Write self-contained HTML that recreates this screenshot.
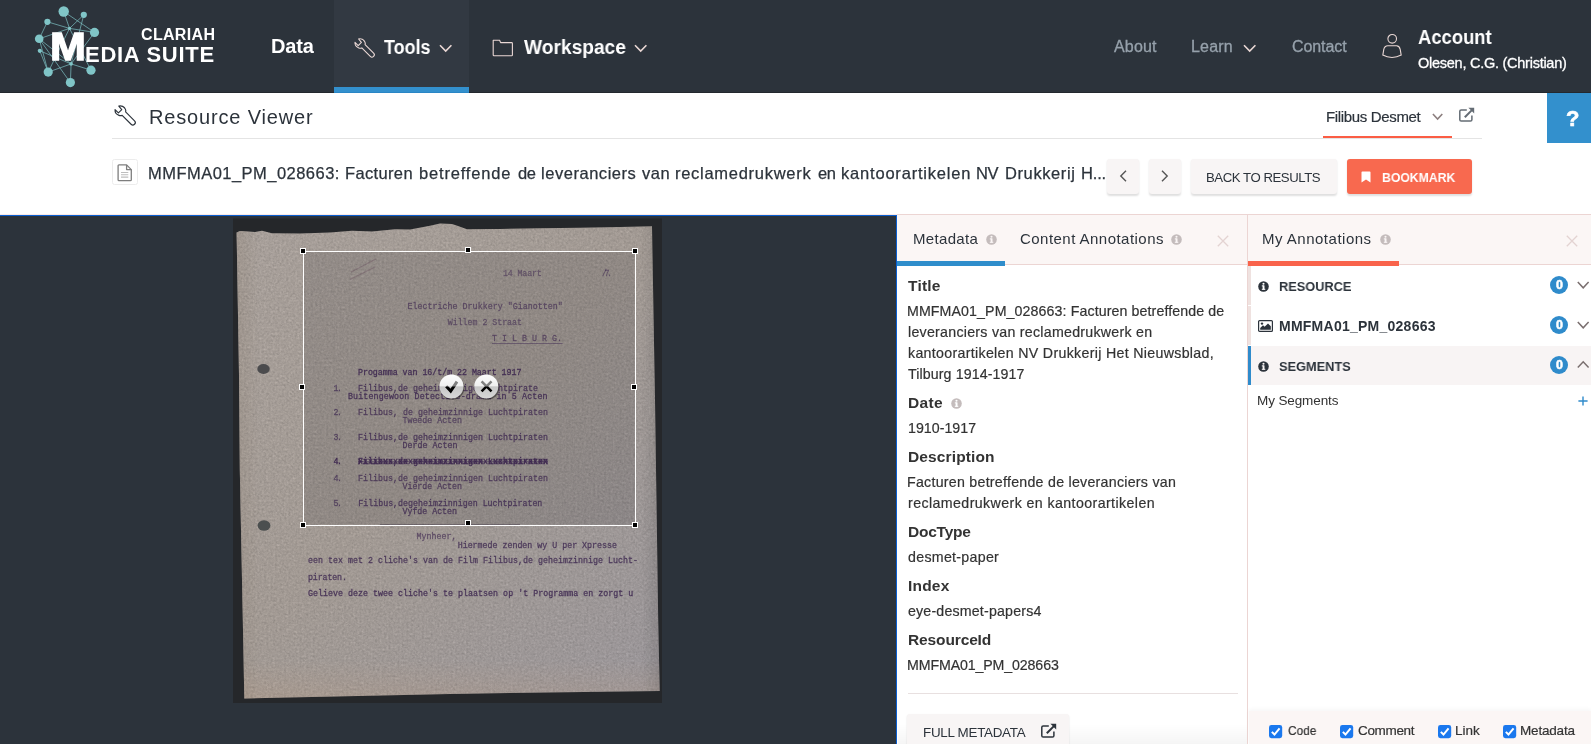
<!DOCTYPE html>
<html lang="en"><head><meta charset="utf-8"><title>Resource Viewer</title>
<style>
html,body{margin:0;padding:0}
body{width:1591px;height:744px;overflow:hidden;position:relative;background:#fff;font-family:"Liberation Sans",sans-serif;}
.a{position:absolute;display:block}
.t{will-change:transform;position:absolute;white-space:pre;line-height:normal;font-family:"Liberation Sans",sans-serif}
.btn{position:absolute;background:#f8f5f5;border-radius:3px;box-shadow:0 1.5px 2px rgba(0,0,0,.13)}
svg{position:absolute;overflow:visible}
.mono{position:absolute;white-space:pre;line-height:1;font-family:"Liberation Mono",monospace;font-weight:400;color:rgba(66,48,84,.62);font-size:8.3px;filter:blur(.35px)}

</style></head><body>
<!-- header -->
<div class="a" style="left:0;top:0;width:1591px;height:93px;background:#23282e"></div><div class="a" style="left:0;top:0;width:1591px;height:92.2px;background:#2c333b"></div>
<div class="a" style="left:334px;top:0;width:135px;height:93px;background:#323942"></div>
<div class="a" style="left:334px;top:87px;width:135px;height:6px;background:#2a86c5"></div><div class="a" style="left:334px;top:87px;width:135px;height:5.2px;background:#3390cd"></div>
<!-- logo network -->
<svg style="left:0;top:0" width="240" height="92" viewBox="0 0 240 92">
 <path d="M63.7 11.5 L69.5 28.4 M63.7 11.5 L94.5 32.4 M83.8 14.8 L69.5 28.4 M83.8 14.8 L71.1 63.9 M47.4 21.8 L69.5 28.4 M47.4 21.8 L39.2 38.8 M39.2 38.8 L69.5 28.4 M39.2 38.8 L71.1 63.9 M39.8 50.8 L71.1 63.9 M39.8 50.8 L48.2 72.1 M48.2 72.1 L71.1 63.9 M48.2 72.1 L69.5 28.4 M70.4 82.6 L71.1 63.9 M70.4 82.6 L39.2 38.8 M91 70.2 L71.1 63.9 M91 70.2 L69.5 28.4 M94.5 32.4 L71.1 63.9 M94.5 32.4 L69.5 28.4 M39.2 38.8 L48.2 72.1" stroke="#7cc0c3" stroke-width="0.7" fill="none"/>
 <g fill="#80c5c7"><circle cx="63.7" cy="11.5" r="5.2"/><circle cx="83.8" cy="14.8" r="3.1"/><circle cx="94.5" cy="32.4" r="4.6"/><circle cx="47.4" cy="21.8" r="3.1"/><circle cx="39.2" cy="38.8" r="4.3"/><circle cx="39.8" cy="50.8" r="2.1"/><circle cx="48.2" cy="72.1" r="4.6"/><circle cx="70.4" cy="82.6" r="4.6"/><circle cx="91" cy="70.2" r="4.6"/><circle cx="69.5" cy="28.4" r="1.6"/><circle cx="71.1" cy="63.9" r="1.8"/></g>
</svg>
<!-- header icons -->
<svg style="left:354px;top:38px" width="21" height="21" viewBox="0 0 21 21" fill="none" stroke="#ead8d5" stroke-width="1.1" stroke-linejoin="round" stroke-linecap="round">
 <path d="M4.6 1 C7 0.3 9.8 1.6 10.8 3.8 C11.3 4.8 11.4 5.8 11.1 6.6 L19.6 15.1 C20.5 16 20.5 17.5 19.6 18.4 C18.7 19.3 17.2 19.3 16.3 18.4 L7.8 9.9 C6.9 10.3 5.8 10.3 4.8 9.9 C2.4 9 0.8 6.9 1 4.4 L4.2 7.6 L7.4 4.4 Z"/>
</svg>
<svg style="left:439px;top:44px" width="14" height="9" viewBox="0 0 14 9" fill="none" stroke="#ead8d5" stroke-width="1.6"><path d="M1 1.2 L6.7 7 L12.4 1.2"/></svg>
<svg style="left:492px;top:39px" width="22" height="18" viewBox="0 0 22 18" fill="none" stroke="#ead8d5" stroke-width="1.1" stroke-linejoin="round"><path d="M1.2 1.2 H7.6 L8.6 3.6 H19.6 Q20.4 3.6 20.4 4.4 V16 Q20.4 16.8 19.6 16.8 H2 Q1.2 16.8 1.2 16 Z"/></svg>
<svg style="left:634px;top:44px" width="14" height="9" viewBox="0 0 14 9" fill="none" stroke="#ead8d5" stroke-width="1.6"><path d="M1 1.2 L6.7 7 L12.4 1.2"/></svg>
<svg style="left:1243px;top:44px" width="14" height="9" viewBox="0 0 14 9" fill="none" stroke="#ead8d5" stroke-width="1.6"><path d="M1 1.2 L6.7 7 L12.4 1.2"/></svg>
<svg style="left:1382px;top:33px" width="20" height="26" viewBox="0 0 20 26" fill="none" stroke="#ead8d5" stroke-width="1.1"><circle cx="10.2" cy="5.8" r="4.3"/><path d="M5.8 12.8 H14.6 Q17.4 13 18.2 16.4 L19.2 22.1 Q15 24.5 10 24.5 Q5 24.5 0.8 22.1 L1.8 16.4 Q2.6 13 5.8 12.8 Z"/></svg>

<!-- sub header -->
<svg style="left:114px;top:105px" width="22" height="22" viewBox="0 0 21 21" fill="none" stroke="#2c333b" stroke-width="1.1" stroke-linejoin="round" stroke-linecap="round">
 <path d="M4.6 1 C7 0.3 9.8 1.6 10.8 3.8 C11.3 4.8 11.4 5.8 11.1 6.6 L19.6 15.1 C20.5 16 20.5 17.5 19.6 18.4 C18.7 19.3 17.2 19.3 16.3 18.4 L7.8 9.9 C6.9 10.3 5.8 10.3 4.8 9.9 C2.4 9 0.8 6.9 1 4.4 L4.2 7.6 L7.4 4.4 Z"/>
</svg>
<div class="a" style="left:112px;top:137.8px;width:1370px;height:1px;background:#e4e4e4"></div>
<div class="a" style="left:1323px;top:135.9px;width:129px;height:2.2px;background:#fb5d44"></div>
<svg style="left:1432.4px;top:113.4px" width="12" height="8" viewBox="0 0 12 8" fill="none" stroke="#8c7f7f" stroke-width="1.6"><path d="M0.9 1 L5.6 6 L10.3 1"/></svg>
<svg style="left:1458px;top:107px" width="17" height="16" viewBox="0 0 17 16" fill="none" stroke="#646c74" stroke-width="1.5"><path d="M13.9 8.6 V12.7 Q13.9 14.1 12.5 14.1 H3.2 Q1.8 14.1 1.8 12.7 V4.3 Q1.8 2.9 3.2 2.9 H8.8"/><path d="M6.8 10.2 L14.4 2.6" stroke-width="2"/><path d="M10.4 0.8 H16.2 V6.6 Z" fill="#646c74" stroke="none"/></svg>
<div class="a" style="left:1547px;top:93px;width:44px;height:50px;background:#3390cd"></div>
<!-- doc icon -->
<div class="a" style="left:111.8px;top:159.2px;width:24.2px;height:24px;border:1px solid #ececec;border-radius:2.5px;background:#fff"></div>
<svg style="left:117px;top:164px" width="16" height="18" viewBox="0 0 16 18" fill="none" stroke="#7e7e7e" stroke-width="1.3" stroke-linejoin="round"><path d="M1.1 1.8 Q1.1 0.9 2 0.9 H9.6 L14.3 5.6 V15.8 Q14.3 16.7 13.4 16.7 H2 Q1.1 16.7 1.1 15.8 Z"/><path d="M9.6 0.9 V5.6 H14.3"/><path d="M4 8.5 H11.3 M4 10.7 H11.3 M4 13.1 H11.3" stroke="#bdbdbd" stroke-width="1.1"/></svg>
<!-- buttons -->
<div class="btn" style="left:1107px;top:159px;width:32px;height:35px"></div>
<div class="btn" style="left:1149px;top:159px;width:32px;height:35px"></div>
<div class="btn" style="left:1191px;top:159px;width:146px;height:35px"></div>
<div class="btn" style="left:1347px;top:159px;width:125px;height:35px;background:#f8694f"></div>
<svg style="left:1118.6px;top:169.4px" width="9" height="14" viewBox="0 0 9 14" fill="none" stroke="#555" stroke-width="1.4"><path d="M7 1.8 L1.8 7 L7 12.2"/></svg>
<svg style="left:1160px;top:169.4px" width="9" height="14" viewBox="0 0 9 14" fill="none" stroke="#555" stroke-width="1.4"><path d="M2 1.8 L7.2 7 L2 12.2"/></svg>
<svg style="left:1361px;top:171px" width="10" height="12" viewBox="0 0 10 12"><path d="M0.5 1.2 Q0.5 0.4 1.3 0.4 H8.7 Q9.5 0.4 9.5 1.2 V11.6 L5 8.4 L0.5 11.6 Z" fill="#fff"/></svg>

<!-- top lines -->
<div class="a" style="left:0;top:214px;width:897px;height:1px;background:#fbeae4"></div>
<div class="a" style="left:897px;top:214px;width:694px;height:1px;background:#ecd5d3"></div>
<!-- viewer -->
<div class="a" style="left:0;top:215px;width:897px;height:529px;background:#0a5fd2"></div>
<div class="a" style="left:0;top:216.2px;width:895.6px;height:528px;background:#2c333b"></div>
<!-- panels -->
<div class="a" style="left:897px;top:215px;width:350px;height:49px;background:#fbf6f5"></div>
<div class="a" style="left:1248px;top:215px;width:343px;height:49px;background:#fbf6f5"></div>
<div class="a" style="left:897px;top:264px;width:694px;height:1px;background:#ecd5d3"></div>
<div class="a" style="left:1247px;top:215px;width:1px;height:529px;background:#ecd5d3"></div>
<div class="a" style="left:897px;top:261px;width:108px;height:5px;background:#2f8dcb"></div>
<div class="a" style="left:1248px;top:261px;width:151px;height:4.8px;background:#f9634b"></div>
<!-- info icons (tabs) -->
<svg style="left:986px;top:234px" width="11" height="11" viewBox="0 0 11 11"><circle cx="5.5" cy="5.5" r="5.3" fill="#c4bcbc"/><rect x="4.6" y="4.4" width="1.9" height="4.2" fill="#fbf6f5"/><rect x="3.8" y="4.4" width="2" height="1" fill="#fbf6f5"/><rect x="3.8" y="7.8" width="3.5" height="1" fill="#fbf6f5"/><circle cx="5.5" cy="2.7" r="1.05" fill="#fbf6f5"/></svg>
<svg style="left:1171px;top:234px" width="11" height="11" viewBox="0 0 11 11"><circle cx="5.5" cy="5.5" r="5.3" fill="#c4bcbc"/><rect x="4.6" y="4.4" width="1.9" height="4.2" fill="#fbf6f5"/><rect x="3.8" y="4.4" width="2" height="1" fill="#fbf6f5"/><rect x="3.8" y="7.8" width="3.5" height="1" fill="#fbf6f5"/><circle cx="5.5" cy="2.7" r="1.05" fill="#fbf6f5"/></svg>
<svg style="left:1380px;top:234px" width="11" height="11" viewBox="0 0 11 11"><circle cx="5.5" cy="5.5" r="5.3" fill="#c4bcbc"/><rect x="4.6" y="4.4" width="1.9" height="4.2" fill="#fbf6f5"/><rect x="3.8" y="4.4" width="2" height="1" fill="#fbf6f5"/><rect x="3.8" y="7.8" width="3.5" height="1" fill="#fbf6f5"/><circle cx="5.5" cy="2.7" r="1.05" fill="#fbf6f5"/></svg>
<svg style="left:950.5px;top:398.4px" width="11" height="11" viewBox="0 0 11 11"><circle cx="5.5" cy="5.5" r="5.3" fill="#c4bcbc"/><rect x="4.6" y="4.4" width="1.9" height="4.2" fill="#fff"/><rect x="3.8" y="4.4" width="2" height="1" fill="#fff"/><rect x="3.8" y="7.8" width="3.5" height="1" fill="#fff"/><circle cx="5.5" cy="2.7" r="1.05" fill="#fff"/></svg>
<!-- close X -->
<svg style="left:1217px;top:235px" width="12" height="12" viewBox="0 0 12 12" stroke="#e3d3d2" stroke-width="1.3"><path d="M0.8 0.8 L11.2 11.2 M11.2 0.8 L0.8 11.2"/></svg>
<svg style="left:1566px;top:235px" width="12" height="12" viewBox="0 0 12 12" stroke="#e3d3d2" stroke-width="1.3"><path d="M0.8 0.8 L11.2 11.2 M11.2 0.8 L0.8 11.2"/></svg>
<!-- metadata bottom -->
<div class="a" style="left:908px;top:693px;width:330px;height:1px;background:#e8e0e0"></div>
<div class="a" style="left:898px;top:724px;width:349px;height:20px;background:linear-gradient(to bottom,rgba(0,0,0,0),rgba(0,0,0,.04))"></div>
<div class="btn" style="left:907.4px;top:714px;width:161.2px;height:40px"></div>
<svg style="left:1040.4px;top:723.4px" width="17" height="16" viewBox="0 0 17 16" fill="none" stroke="#2c333b" stroke-width="1.5"><path d="M13.9 8.6 V12.7 Q13.9 14.1 12.5 14.1 H3.2 Q1.8 14.1 1.8 12.7 V4.3 Q1.8 2.9 3.2 2.9 H8.8"/><path d="M6.8 10.2 L14.4 2.6" stroke-width="2"/><path d="M10.4 0.8 H16.2 V6.6 Z" fill="#2c333b" stroke="none"/></svg>
<!-- annotation rows -->
<div class="a" style="left:1248px;top:265.5px;width:3px;height:39.5px;background:#efe2e0"></div>
<div class="a" style="left:1248px;top:306px;width:3px;height:39px;background:#efe2e0"></div>
<div class="a" style="left:1248px;top:346px;width:343px;height:39px;background:#f8f4f4"></div>
<div class="a" style="left:1248px;top:346px;width:3px;height:39px;background:#2f8bcb"></div>
<!-- row icons -->
<svg style="left:1258px;top:281px" width="11" height="11" viewBox="0 0 11 11"><circle cx="5.5" cy="5.5" r="5.3" fill="#2c333b"/><rect x="4.6" y="4.4" width="1.9" height="4.2" fill="#fff"/><rect x="3.8" y="4.4" width="2" height="1" fill="#fff"/><rect x="3.8" y="7.8" width="3.5" height="1" fill="#fff"/><circle cx="5.5" cy="2.7" r="1.05" fill="#fff"/></svg>
<svg style="left:1258px;top:361px" width="11" height="11" viewBox="0 0 11 11"><circle cx="5.5" cy="5.5" r="5.3" fill="#2c333b"/><rect x="4.6" y="4.4" width="1.9" height="4.2" fill="#f8f4f4"/><rect x="3.8" y="4.4" width="2" height="1" fill="#f8f4f4"/><rect x="3.8" y="7.8" width="3.5" height="1" fill="#f8f4f4"/><circle cx="5.5" cy="2.7" r="1.05" fill="#f8f4f4"/></svg>
<svg style="left:1258px;top:320px" width="15" height="12" viewBox="0 0 15 12"><rect x="0.6" y="0.6" width="13.8" height="10.8" rx="1" fill="none" stroke="#2c333b" stroke-width="1.2"/><path d="M2.2 9.8 V8 L5 5.2 L6.6 6.8 L10 3.4 L12.8 6.2 V9.8 Z" fill="#2c333b"/><circle cx="4" cy="3.6" r="1.2" fill="#2c333b"/></svg>
<!-- badges -->
<div class="a" style="left:1550px;top:276px;width:18px;height:18px;border-radius:9px;background:#2f8bcb"></div>
<div class="a" style="left:1550px;top:316px;width:18px;height:18px;border-radius:9px;background:#2f8bcb"></div>
<div class="a" style="left:1550px;top:356px;width:18px;height:18px;border-radius:9px;background:#2f8bcb"></div>
<svg style="left:1577px;top:281px" width="13" height="9" viewBox="0 0 13 9" fill="none" stroke="#7a6f6f" stroke-width="1.5"><path d="M0.8 1 L6.2 6.8 L11.6 1"/></svg>
<svg style="left:1577px;top:321px" width="13" height="9" viewBox="0 0 13 9" fill="none" stroke="#7a6f6f" stroke-width="1.5"><path d="M0.8 1 L6.2 6.8 L11.6 1"/></svg>
<svg style="left:1577px;top:360px" width="13" height="9" viewBox="0 0 13 9" fill="none" stroke="#7a6f6f" stroke-width="1.5"><path d="M0.8 7.6 L6.2 1.8 L11.6 7.6"/></svg>
<svg style="left:1578px;top:396px" width="10" height="10" viewBox="0 0 10 10" stroke="#2f8bcb" stroke-width="1.4"><path d="M5 0.4 V9.6 M0.4 5 H9.6"/></svg>
<!-- footer checkboxes -->
<div class="a" style="left:1249px;top:710.5px;width:342px;height:34px;background:#fbf6f5;box-shadow:0 -2px 4px rgba(0,0,0,.035)"></div>
<svg style="left:1269px;top:724.7px" width="13.2" height="13.2" viewBox="0 0 13 13"><rect x="0" y="0" width="13" height="13" rx="2.4" fill="#1a78ee"/><path d="M2.8 6.8 L5.4 9.4 L10.4 3.4" fill="none" stroke="#fff" stroke-width="2"/></svg>
<svg style="left:1340px;top:724.7px" width="13.2" height="13.2" viewBox="0 0 13 13"><rect x="0" y="0" width="13" height="13" rx="2.4" fill="#1a78ee"/><path d="M2.8 6.8 L5.4 9.4 L10.4 3.4" fill="none" stroke="#fff" stroke-width="2"/></svg>
<svg style="left:1438px;top:724.7px" width="13.2" height="13.2" viewBox="0 0 13 13"><rect x="0" y="0" width="13" height="13" rx="2.4" fill="#1a78ee"/><path d="M2.8 6.8 L5.4 9.4 L10.4 3.4" fill="none" stroke="#fff" stroke-width="2"/></svg>
<svg style="left:1503px;top:724.7px" width="13.2" height="13.2" viewBox="0 0 13 13"><rect x="0" y="0" width="13" height="13" rx="2.4" fill="#1a78ee"/><path d="M2.8 6.8 L5.4 9.4 L10.4 3.4" fill="none" stroke="#fff" stroke-width="2"/></svg>
<!-- document -->

<svg style="left:0;top:0" width="897" height="744" viewBox="0 0 897 744">
 <defs>
  <filter id="nz" x="0" y="0" width="100%" height="100%"><feTurbulence type="fractalNoise" baseFrequency="0.45" numOctaves="3" seed="3"/><feColorMatrix values="0 0 0 0 0  0 0 0 0 0  0 0 0 0 0  0.6 0.6 0.6 0 -0.4"/></filter>
  <linearGradient id="pg" x1="0" y1="0" x2="0.9" y2="1"><stop offset="0" stop-color="#bab1ab"/><stop offset="0.5" stop-color="#b4aba4"/><stop offset="1" stop-color="#aca7aa"/></linearGradient>
  <linearGradient id="pe" x1="0" y1="0" x2="1" y2="0"><stop offset="0" stop-color="#a59a8f" stop-opacity=".55"/><stop offset="0.06" stop-color="#a59a8f" stop-opacity="0"/><stop offset="0.95" stop-color="#000" stop-opacity="0"/><stop offset="1" stop-color="#000" stop-opacity=".12"/></linearGradient>
  <linearGradient id="pb" x1="0" y1="0" x2="0" y2="1"><stop offset="0" stop-color="#c89a72" stop-opacity="0"/><stop offset="1" stop-color="#c89a72" stop-opacity=".16"/></linearGradient>
  <clipPath id="pc"><path id="pp" d="M236.6 232.5 L240 231 L255 232 L262 230.8 L272 233.2 L300 233.6 L330 232.6 L352 230.8 L372 231.6 L395 229.3 L410 229.5 L430 225.8 L440 223.6 L452 224 L458 226 L467 229.3 L500 229 L540 228.2 L580 227.8 L620 227 L652 226.3 L655 400 L658.2 620 L659.7 690.9 L450 693.9 L244.3 698.4 L242.8 620 L239.8 470 L239 375 Z"/></clipPath>
 </defs>
 <rect x="233" y="218.5" width="429" height="484.5" fill="#25272a"/>
 <use href="#pp" fill="url(#pg)"/>
 <g clip-path="url(#pc)">
  <rect x="233" y="218" width="429" height="485" fill="url(#pe)"/>
  <rect x="233" y="218" width="429" height="485" filter="url(#nz)" opacity=".2"/>
  <rect x="233" y="660" width="429" height="40" fill="url(#pb)"/>
  <rect x="303.5" y="251.5" width="331.3" height="273.2" fill="rgba(20,18,28,.12)"/>
  <ellipse cx="263.5" cy="369" rx="6.2" ry="5" fill="#4b4b4d"/>
  <ellipse cx="264" cy="525.5" rx="6.4" ry="5.2" fill="#4b4f4f"/>
  <path d="M351 272 L376 259 M350 279.5 L375 267" stroke="rgba(90,60,80,.3)" stroke-width="1.2" fill="none"/>
  <path d="M492 343.5 H562.5" stroke="rgba(64,44,84,.5)" stroke-width="1"/>
  <path d="M358 461.8 H548" stroke="rgba(64,44,84,.5)" stroke-width="1.6"/>
  <path d="M380 524.8 H520" stroke="rgba(40,30,50,.5)" stroke-width="1"/>
 </g>
</svg>
<span class="mono" style="left:503.0px;top:270.1px;letter-spacing:-0.150px;color:rgba(62,40,80,0.45);-webkit-text-stroke:.3px rgba(62,40,80,0.45)">14 Maart</span>
<span class="mono" style="left:602.0px;top:270.1px;letter-spacing:-2.471px;color:rgba(62,40,80,0.45);-webkit-text-stroke:.3px rgba(62,40,80,0.45)">/7.</span>
<span class="mono" style="left:407.5px;top:303.1px;letter-spacing:0.030px;color:rgba(62,40,80,0.56);-webkit-text-stroke:.3px rgba(62,40,80,0.56)">Electriche Drukkery &quot;Gianotten&quot;</span>
<span class="mono" style="left:447.8px;top:319.1px;letter-spacing:-0.037px;color:rgba(62,40,80,0.50);-webkit-text-stroke:.3px rgba(62,40,80,0.50)">Willem 2 Straat</span>
<span class="mono" style="left:492.0px;top:335.4px;letter-spacing:0.021px;color:rgba(62,40,80,0.56);-webkit-text-stroke:.3px rgba(62,40,80,0.56)">T I L B U R G.</span>
<span class="mono" style="left:358.0px;top:368.6px;letter-spacing:-0.027px;color:rgba(62,40,80,0.88);-webkit-text-stroke:.3px rgba(62,40,80,0.88)">Progamma van 16/t/m 22 Maart 1917</span>
<span class="mono" style="left:333.5px;top:385.1px;letter-spacing:-1.462px;color:rgba(62,40,80,0.62);-webkit-text-stroke:.3px rgba(62,40,80,0.62)">1.</span>
<span class="mono" style="left:358.0px;top:385.1px;letter-spacing:0.020px;color:rgba(62,40,80,0.75);-webkit-text-stroke:.3px rgba(62,40,80,0.75)">Filibus,de geheimzinnige Luchtpirate</span>
<span class="mono" style="left:348.0px;top:392.6px;letter-spacing:0.141px;color:rgba(62,40,80,0.81);-webkit-text-stroke:.3px rgba(62,40,80,0.81)">Buitengewoon Detective-drama in 5 Acten</span>
<span class="mono" style="left:333.5px;top:409.1px;letter-spacing:-1.462px;color:rgba(62,40,80,0.62);-webkit-text-stroke:.3px rgba(62,40,80,0.62)">2.</span>
<span class="mono" style="left:358.0px;top:409.1px;letter-spacing:0.020px;color:rgba(62,40,80,0.69);-webkit-text-stroke:.3px rgba(62,40,80,0.69)">Filibus, de geheimzinnige Luchtpiraten</span>
<span class="mono" style="left:402.5px;top:417.1px;letter-spacing:-0.025px;color:rgba(62,40,80,0.62);-webkit-text-stroke:.3px rgba(62,40,80,0.62)">Tweede Acten</span>
<span class="mono" style="left:333.5px;top:434.1px;letter-spacing:-1.462px;color:rgba(62,40,80,0.62);-webkit-text-stroke:.3px rgba(62,40,80,0.62)">3.</span>
<span class="mono" style="left:358.0px;top:434.1px;letter-spacing:0.020px;color:rgba(62,40,80,0.75);-webkit-text-stroke:.3px rgba(62,40,80,0.75)">Filibus,de geheimzinnigen Luchtpiraten</span>
<span class="mono" style="left:402.5px;top:441.6px;letter-spacing:0.031px;color:rgba(62,40,80,0.75);-webkit-text-stroke:.3px rgba(62,40,80,0.75)">Derde Acten</span>
<span class="mono" style="left:333.5px;top:458.1px;letter-spacing:-1.462px;color:rgba(62,40,80,1.00);-webkit-text-stroke:.3px rgba(62,40,80,1.00)">4.</span>
<span class="mono" style="left:358.0px;top:458.1px;letter-spacing:0.020px;color:rgba(62,40,80,0.88);-webkit-text-stroke:.3px rgba(62,40,80,0.88)">Filibus,de geheimzinnigen Luchtpiraten</span>
<span class="mono" style="left:358.0px;top:458.1px;letter-spacing:0.020px;color:rgba(62,40,80,0.94);-webkit-text-stroke:.3px rgba(62,40,80,0.94)">xxxxxxxxxxxxxxxxxxxxxxxxxxxxxxxxxxxxxx</span>
<span class="mono" style="left:333.5px;top:474.6px;letter-spacing:-1.462px;color:rgba(62,40,80,0.62);-webkit-text-stroke:.3px rgba(62,40,80,0.62)">4.</span>
<span class="mono" style="left:358.0px;top:474.6px;letter-spacing:0.020px;color:rgba(62,40,80,0.69);-webkit-text-stroke:.3px rgba(62,40,80,0.69)">Filibus,de geheimzinnigen Luchtpiraten</span>
<span class="mono" style="left:402.5px;top:483.1px;letter-spacing:-0.025px;color:rgba(62,40,80,0.69);-webkit-text-stroke:.3px rgba(62,40,80,0.69)">Vierde Acten</span>
<span class="mono" style="left:333.5px;top:499.6px;letter-spacing:-1.462px;color:rgba(62,40,80,0.62);-webkit-text-stroke:.3px rgba(62,40,80,0.62)">5.</span>
<span class="mono" style="left:358.3px;top:499.6px;letter-spacing:-0.005px;color:rgba(62,40,80,0.75);-webkit-text-stroke:.3px rgba(62,40,80,0.75)">Filibus,degeheimzinnigen Luchtpiraten</span>
<span class="mono" style="left:402.5px;top:507.6px;letter-spacing:-0.029px;color:rgba(62,40,80,0.75);-webkit-text-stroke:.3px rgba(62,40,80,0.75)">Vyfde Acten</span>
<span class="mono" style="left:416.5px;top:532.9px;letter-spacing:0.036px;color:rgba(62,40,80,0.56);-webkit-text-stroke:.3px rgba(62,40,80,0.56)">Mynheer,</span>
<span class="mono" style="left:457.7px;top:541.6px;letter-spacing:-0.003px;color:rgba(62,40,80,0.75);-webkit-text-stroke:.3px rgba(62,40,80,0.75)">Hiermede zenden wy U per Xpresse</span>
<span class="mono" style="left:307.9px;top:556.6px;letter-spacing:0.021px;color:rgba(62,40,80,0.75);-webkit-text-stroke:.3px rgba(62,40,80,0.75)">een tex met 2 cliche's van de Film Filibus,de geheimzinnige Lucht-</span>
<span class="mono" style="left:307.9px;top:574.1px;letter-spacing:-0.107px;color:rgba(62,40,80,0.75);-webkit-text-stroke:.3px rgba(62,40,80,0.75)">piraten.</span>
<span class="mono" style="left:307.9px;top:589.9px;letter-spacing:0.027px;color:rgba(62,40,80,0.81);-webkit-text-stroke:.3px rgba(62,40,80,0.81)">Gelieve deze twee cliche's te plaatsen op 't Programma en zorgt u</span>
<div class="a" style="left:302.9px;top:250.9px;width:331.3px;height:273.2px;border:1.3px solid #fff"></div>
<div class="a" style="left:300.1px;top:248.1px;width:3.8px;height:3.8px;background:#000;border:1px solid #fff"></div>
<div class="a" style="left:465.1px;top:247.1px;width:3.8px;height:3.8px;background:#000;border:1px solid #fff"></div>
<div class="a" style="left:632.1px;top:248.1px;width:3.8px;height:3.8px;background:#000;border:1px solid #fff"></div>
<div class="a" style="left:299.3px;top:384.2px;width:3.8px;height:3.8px;background:#000;border:1px solid #fff"></div>
<div class="a" style="left:631.1px;top:384.1px;width:3.8px;height:3.8px;background:#000;border:1px solid #fff"></div>
<div class="a" style="left:300.0px;top:522.0px;width:3.8px;height:3.8px;background:#000;border:1px solid #fff"></div>
<div class="a" style="left:464.9px;top:520.2px;width:3.8px;height:3.8px;background:#000;border:1px solid #fff"></div>
<div class="a" style="left:631.8px;top:522.0px;width:3.8px;height:3.8px;background:#000;border:1px solid #fff"></div>
<svg style="left:437px;top:373px" width="66" height="30" viewBox="0 0 66 30">
 <defs>
  <linearGradient id="bg1" x1="0" y1="0" x2="0" y2="1"><stop offset="0" stop-color="#fafafa"/><stop offset="0.5" stop-color="#dedede"/><stop offset="0.5" stop-color="#c6c6c6"/><stop offset="1" stop-color="#d8d8d8"/></linearGradient>
  <clipPath id="c1"><rect x="0" y="0" width="66" height="13.5"/></clipPath>
 </defs>
 <circle cx="15.3" cy="14.6" r="12.2" fill="rgba(0,0,0,.4)"/>
 <circle cx="14.5" cy="13.5" r="12" fill="url(#bg1)"/>
 <path d="M9.2 13.2 L13.7 18 L20 8.6" fill="none" stroke="#000" stroke-width="3" stroke-linejoin="miter"/>
 <circle cx="50.1" cy="14.6" r="12.2" fill="rgba(0,0,0,.4)"/>
 <circle cx="49.3" cy="13.5" r="12" fill="url(#bg1)"/>
 <path d="M44.6 8.3 L54.5 18.3 M54.5 8.3 L44.6 18.3" fill="none" stroke="#000" stroke-width="2.5"/>
 <g clip-path="url(#c1)"><circle cx="14.5" cy="13.5" r="12" fill="rgba(255,255,255,.5)"/><circle cx="49.3" cy="13.5" r="12" fill="rgba(255,255,255,.5)"/></g>
</svg>

<!-- text -->
<span class="t" style="left:52.25px;top:25.00px;font-size:38.5px;font-weight:700;color:#fff;letter-spacing:0.000px;-webkit-text-stroke:1.3px #fff;transform:scaleX(1.12);">M</span>
<span class="t" style="left:84.50px;top:42.00px;font-size:22px;font-weight:700;color:#fff;letter-spacing:0.713px;">EDIA SUITE</span>
<span class="t" style="left:140.80px;top:26.00px;font-size:16px;font-weight:700;color:#fff;letter-spacing:0.327px;">CLARIAH</span>
<span class="t" style="left:270.50px;top:35.00px;font-size:20px;font-weight:700;color:#fff;letter-spacing:-0.176px;">Data</span>
<span class="t" style="left:384.00px;top:36.00px;font-size:20px;font-weight:700;color:#fff;letter-spacing:0.000px;transform:scaleX(0.8952);transform-origin:0 50%;">Tools</span>
<span class="t" style="left:523.50px;top:36.00px;font-size:20px;font-weight:700;color:#fff;letter-spacing:0.000px;transform:scaleX(0.9583);transform-origin:0 50%;">Workspace</span>
<span class="t" style="left:1114.00px;top:38.00px;font-size:16px;font-weight:400;color:#96a1ab;letter-spacing:0.158px;-webkit-text-stroke:0.3px #96a1ab;">About</span>
<span class="t" style="left:1191.30px;top:38.00px;font-size:16px;font-weight:400;color:#96a1ab;letter-spacing:0.169px;-webkit-text-stroke:0.3px #96a1ab;">Learn</span>
<span class="t" style="left:1292.30px;top:38.00px;font-size:16px;font-weight:400;color:#96a1ab;letter-spacing:-0.083px;-webkit-text-stroke:0.3px #96a1ab;">Contact</span>
<span class="t" style="left:1418.00px;top:26.00px;font-size:20px;font-weight:700;color:#fff;letter-spacing:0.000px;transform:scaleX(0.9211);transform-origin:0 50%;">Account</span>
<span class="t" style="left:1418.00px;top:55.00px;font-size:14.5px;font-weight:400;color:#fff;letter-spacing:-0.256px;-webkit-text-stroke:0.3px #fff;">Olesen, C.G. (Christian)</span>
<span class="t" style="left:149.00px;top:106.00px;font-size:20px;font-weight:400;color:#2c333b;letter-spacing:0.838px;">Resource Viewer</span>
<span class="t" style="left:147.80px;top:164.00px;font-size:16.5px;font-weight:400;color:#2c333b;letter-spacing:0.469px;-webkit-text-stroke:0.25px #2c333b;">MMFMA01_PM_028663:</span>
<span class="t" style="left:344.80px;top:164.00px;font-size:16.5px;font-weight:400;color:#2c333b;letter-spacing:0.352px;-webkit-text-stroke:0.25px #2c333b;">Facturen</span>
<span class="t" style="left:418.70px;top:164.00px;font-size:16.5px;font-weight:400;color:#2c333b;letter-spacing:0.819px;-webkit-text-stroke:0.25px #2c333b;">betreffende</span>
<span class="t" style="left:517.61px;top:164.00px;font-size:16.5px;font-weight:400;color:#2c333b;letter-spacing:-0.400px;-webkit-text-stroke:0.25px #2c333b;">de</span>
<span class="t" style="left:541.30px;top:164.00px;font-size:16.5px;font-weight:400;color:#2c333b;letter-spacing:0.536px;-webkit-text-stroke:0.25px #2c333b;">leveranciers</span>
<span class="t" style="left:641.90px;top:164.00px;font-size:16.5px;font-weight:400;color:#2c333b;letter-spacing:0.487px;-webkit-text-stroke:0.25px #2c333b;">van</span>
<span class="t" style="left:675.20px;top:164.00px;font-size:16.5px;font-weight:400;color:#2c333b;letter-spacing:0.716px;-webkit-text-stroke:0.25px #2c333b;">reclamedrukwerk</span>
<span class="t" style="left:817.86px;top:164.00px;font-size:16.5px;font-weight:400;color:#2c333b;letter-spacing:-0.400px;-webkit-text-stroke:0.25px #2c333b;">en</span>
<span class="t" style="left:841.10px;top:164.00px;font-size:16.5px;font-weight:400;color:#2c333b;letter-spacing:0.805px;-webkit-text-stroke:0.25px #2c333b;">kantoorartikelen</span>
<span class="t" style="left:976.34px;top:164.00px;font-size:16.5px;font-weight:400;color:#2c333b;letter-spacing:-0.400px;-webkit-text-stroke:0.25px #2c333b;">NV</span>
<span class="t" style="left:1004.50px;top:164.00px;font-size:16.5px;font-weight:400;color:#2c333b;letter-spacing:0.597px;-webkit-text-stroke:0.25px #2c333b;">Drukkerij</span>
<span class="t" style="left:1080.60px;top:164.00px;font-size:16.5px;font-weight:400;color:#2c333b;letter-spacing:-0.161px;-webkit-text-stroke:0.25px #2c333b;">H...</span>
<span class="t" style="left:1326.00px;top:108.00px;font-size:15px;font-weight:400;color:#2c333b;letter-spacing:-0.340px;-webkit-text-stroke:0.2px #2c333b;">Filibus Desmet</span>
<span class="t" style="left:1565.90px;top:106.00px;font-size:22px;font-weight:700;color:#fff;letter-spacing:0.000px;-webkit-text-stroke:0.6px #fff;">?</span>
<span class="t" style="left:1206.00px;top:170.00px;font-size:13.2px;font-weight:400;color:#2c333b;letter-spacing:-0.455px;">BACK TO RESULTS</span>
<span class="t" style="left:1382.10px;top:170.00px;font-size:13px;font-weight:700;color:#fff;letter-spacing:0.000px;transform:scaleX(0.9401);transform-origin:0 50%;">BOOKMARK</span>
<span class="t" style="left:912.50px;top:230.00px;font-size:15px;font-weight:400;color:#2c333b;letter-spacing:0.329px;">Metadata</span>
<span class="t" style="left:1020.00px;top:230.00px;font-size:15px;font-weight:400;color:#2c333b;letter-spacing:0.465px;">Content Annotations</span>
<span class="t" style="left:1262.40px;top:230.00px;font-size:15px;font-weight:400;color:#2c333b;letter-spacing:0.501px;">My Annotations</span>
<span class="t" style="left:908.20px;top:277.00px;font-size:15.5px;font-weight:700;color:#333;letter-spacing:0.209px;">Title</span>
<span class="t" style="left:907.30px;top:303.00px;font-size:14.2px;font-weight:400;color:#333;letter-spacing:0.106px;-webkit-text-stroke:0.2px #333;">MMFMA01_PM_028663: Facturen betreffende de</span>
<span class="t" style="left:908.30px;top:324.00px;font-size:14.2px;font-weight:400;color:#333;letter-spacing:0.268px;-webkit-text-stroke:0.2px #333;">leveranciers van reclamedrukwerk en</span>
<span class="t" style="left:908.30px;top:345.00px;font-size:14.2px;font-weight:400;color:#333;letter-spacing:0.316px;-webkit-text-stroke:0.2px #333;">kantoorartikelen NV Drukkerij Het Nieuwsblad,</span>
<span class="t" style="left:908.30px;top:366.00px;font-size:14.2px;font-weight:400;color:#333;letter-spacing:0.110px;-webkit-text-stroke:0.2px #333;">Tilburg 1914-1917</span>
<span class="t" style="left:907.90px;top:394.00px;font-size:15.5px;font-weight:700;color:#333;letter-spacing:0.375px;">Date</span>
<span class="t" style="left:907.80px;top:420.00px;font-size:14.2px;font-weight:400;color:#333;letter-spacing:0.030px;-webkit-text-stroke:0.2px #333;">1910-1917</span>
<span class="t" style="left:907.50px;top:448.00px;font-size:15.5px;font-weight:700;color:#333;letter-spacing:0.130px;">Description</span>
<span class="t" style="left:907.30px;top:474.00px;font-size:14.2px;font-weight:400;color:#333;letter-spacing:0.266px;-webkit-text-stroke:0.2px #333;">Facturen betreffende de leveranciers van</span>
<span class="t" style="left:908.30px;top:495.00px;font-size:14.2px;font-weight:400;color:#333;letter-spacing:0.411px;-webkit-text-stroke:0.2px #333;">reclamedrukwerk en kantoorartikelen</span>
<span class="t" style="left:907.90px;top:523.00px;font-size:15.5px;font-weight:700;color:#333;letter-spacing:-0.231px;">DocType</span>
<span class="t" style="left:908.30px;top:549.00px;font-size:14.2px;font-weight:400;color:#333;letter-spacing:0.299px;-webkit-text-stroke:0.2px #333;">desmet-paper</span>
<span class="t" style="left:908.00px;top:577.00px;font-size:15.5px;font-weight:700;color:#333;letter-spacing:0.209px;">Index</span>
<span class="t" style="left:908.30px;top:603.00px;font-size:14.2px;font-weight:400;color:#333;letter-spacing:0.187px;-webkit-text-stroke:0.2px #333;">eye-desmet-papers4</span>
<span class="t" style="left:907.90px;top:631.00px;font-size:15.5px;font-weight:700;color:#333;letter-spacing:-0.128px;">ResourceId</span>
<span class="t" style="left:907.30px;top:657.00px;font-size:14.2px;font-weight:400;color:#333;letter-spacing:-0.124px;-webkit-text-stroke:0.2px #333;">MMFMA01_PM_028663</span>
<span class="t" style="left:923.40px;top:725.00px;font-size:13.4px;font-weight:400;color:#2c333b;letter-spacing:-0.272px;">FULL METADATA</span>
<span class="t" style="left:1278.60px;top:279.00px;font-size:13.5px;font-weight:700;color:#2c333b;letter-spacing:0.000px;transform:scaleX(0.9463);transform-origin:0 50%;">RESOURCE</span>
<span class="t" style="left:1278.60px;top:318.00px;font-size:14px;font-weight:700;color:#2c333b;letter-spacing:0.249px;">MMFMA01_PM_028663</span>
<span class="t" style="left:1278.60px;top:359.00px;font-size:13.5px;font-weight:700;color:#2c333b;letter-spacing:0.000px;transform:scaleX(0.9465);transform-origin:0 50%;">SEGMENTS</span>
<span class="t" style="left:1257.30px;top:393.00px;font-size:13.5px;font-weight:400;color:#333;letter-spacing:-0.108px;">My Segments</span>
<span class="t" style="left:1288.00px;top:723.00px;font-size:13.5px;font-weight:400;color:#333;letter-spacing:0.000px;-webkit-text-stroke:0.2px #333;transform:scaleX(0.8815);transform-origin:0 50%;">Code</span>
<span class="t" style="left:1357.80px;top:723.00px;font-size:13.5px;font-weight:400;color:#333;letter-spacing:-0.327px;-webkit-text-stroke:0.2px #333;">Comment</span>
<span class="t" style="left:1454.70px;top:723.00px;font-size:13.5px;font-weight:400;color:#333;letter-spacing:-0.005px;-webkit-text-stroke:0.2px #333;">Link</span>
<span class="t" style="left:1520.30px;top:723.00px;font-size:13.5px;font-weight:400;color:#333;letter-spacing:-0.183px;-webkit-text-stroke:0.2px #333;">Metadata</span>
<span class="t" style="left:1555.55px;top:278.00px;font-size:12.5px;font-weight:700;color:#fff;letter-spacing:0.000px;-webkit-text-stroke:0.5px #fff;">0</span>
<span class="t" style="left:1555.55px;top:318.00px;font-size:12.5px;font-weight:700;color:#fff;letter-spacing:0.000px;-webkit-text-stroke:0.5px #fff;">0</span>
<span class="t" style="left:1555.55px;top:358.00px;font-size:12.5px;font-weight:700;color:#fff;letter-spacing:0.000px;-webkit-text-stroke:0.5px #fff;">0</span>
</body></html>
